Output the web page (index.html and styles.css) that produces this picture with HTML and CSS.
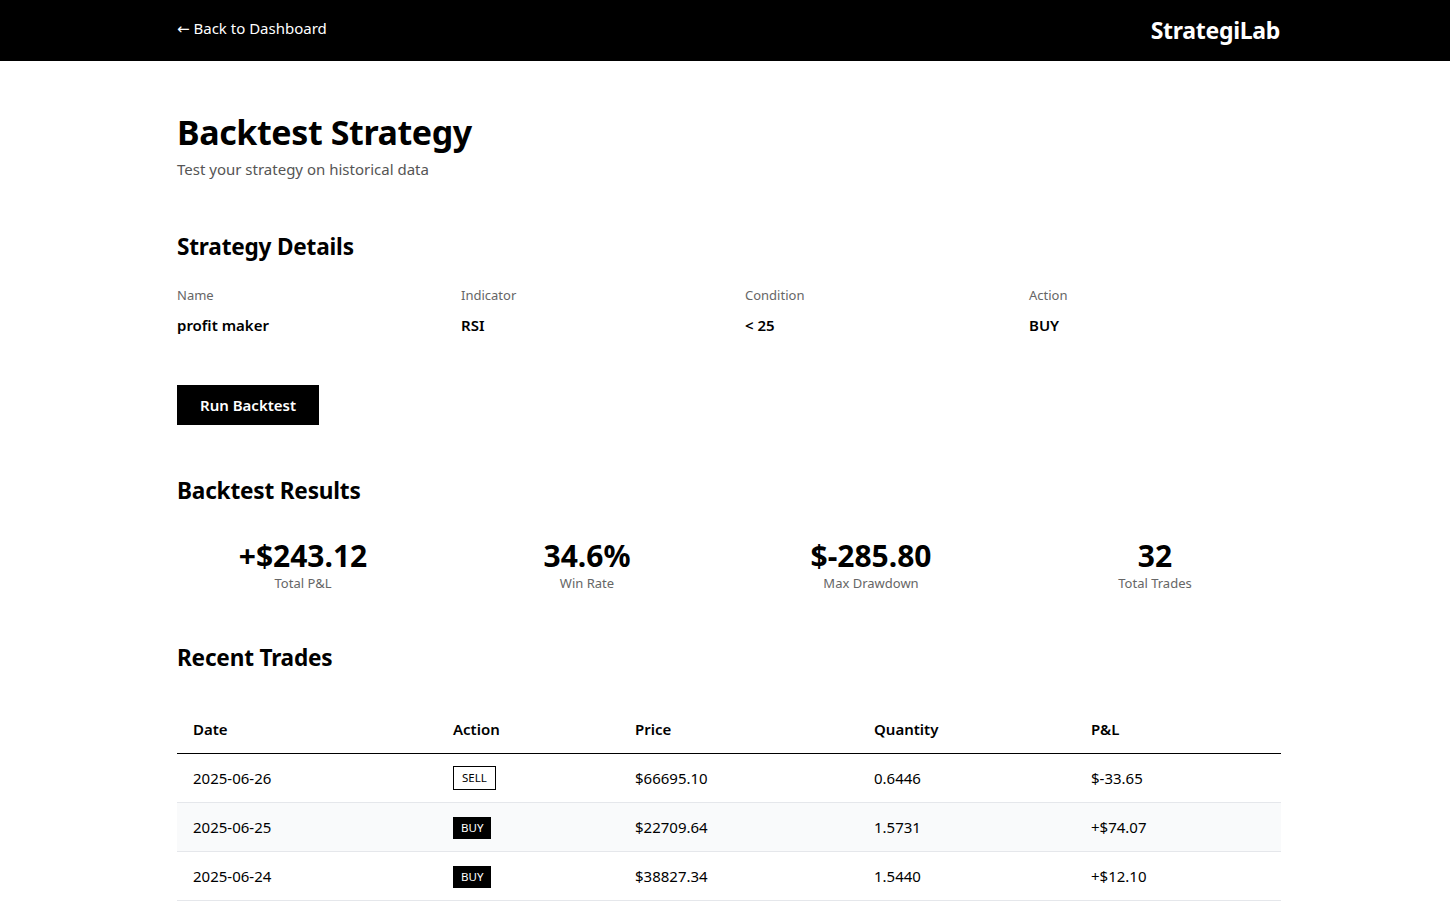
FILE: index.html
```html
<!DOCTYPE html>
<html lang="en">
<head>
<meta charset="utf-8">
<title>Backtest Strategy - StrategiLab</title>
<link rel="stylesheet" href="styles.css">
</head>
<body>
<header class="topbar">
  <div class="topbar-inner">
    <a class="back-link" href="#"><span class="arrow">←</span> Back to Dashboard</a>
    <div class="logo">StrategiLab</div>
  </div>
</header>
<main class="container">
  <h1 class="page-title">Backtest Strategy</h1>
  <p class="page-subtitle">Test your strategy on historical data</p>

  <section class="section details">
    <h2 class="section-title">Strategy Details</h2>
    <div class="detail-grid">
      <div class="detail"><div class="detail-label">Name</div><div class="detail-value">profit maker</div></div>
      <div class="detail"><div class="detail-label">Indicator</div><div class="detail-value">RSI</div></div>
      <div class="detail"><div class="detail-label">Condition</div><div class="detail-value">&lt; 25</div></div>
      <div class="detail"><div class="detail-label">Action</div><div class="detail-value">BUY</div></div>
    </div>
  </section>

  <button class="run-btn" type="button">Run Backtest</button>

  <section class="section results">
    <h2 class="section-title">Backtest Results</h2>
    <div class="stat-grid">
      <div class="stat"><div class="stat-value">+$243.12</div><div class="stat-label">Total P&amp;L</div></div>
      <div class="stat"><div class="stat-value">34.6%</div><div class="stat-label">Win Rate</div></div>
      <div class="stat"><div class="stat-value">$-285.80</div><div class="stat-label">Max Drawdown</div></div>
      <div class="stat"><div class="stat-value">32</div><div class="stat-label">Total Trades</div></div>
    </div>
  </section>

  <section class="section trades">
    <h2 class="section-title">Recent Trades</h2>
    <table class="trade-table">
      <colgroup>
        <col class="c-date"><col class="c-action"><col class="c-price"><col class="c-qty"><col class="c-pnl">
      </colgroup>
      <thead>
        <tr><th>Date</th><th>Action</th><th>Price</th><th>Quantity</th><th>P&amp;L</th></tr>
      </thead>
      <tbody>
        <tr><td>2025-06-26</td><td><span class="badge badge-sell">SELL</span></td><td>$66695.10</td><td>0.6446</td><td>$-33.65</td></tr>
        <tr><td>2025-06-25</td><td><span class="badge badge-buy">BUY</span></td><td>$22709.64</td><td>1.5731</td><td>+$74.07</td></tr>
        <tr><td>2025-06-24</td><td><span class="badge badge-buy">BUY</span></td><td>$38827.34</td><td>1.5440</td><td>+$12.10</td></tr>
      </tbody>
    </table>
  </section>
</main>
</body>
</html>
```

FILE: styles.css
```css
* { box-sizing: border-box; }

body {
  margin: 0;
  background: #fff;
  color: #000;
  font-family: "Segoe UI", "Noto Sans", "Open Sans", sans-serif;
}

.topbar {
  background: #000;
  height: 61px;
}

.topbar-inner {
  margin: 0 170px 0 177px;
  height: 100%;
  display: flex;
  align-items: center;
  justify-content: space-between;
  padding-bottom: 6px;
}

.back-link {
  color: #fff;
  text-decoration: none;
  font-size: 15px;
}

.arrow {
  font-family: "DejaVu Sans", sans-serif;
  font-size: 15px;
}

.logo {
  color: #fff;
  font-weight: 700;
  font-size: 23px;
  letter-spacing: -0.3px;
  padding-top: 5px;
}

.container {
  margin: 0 169px 0 177px;
  padding-top: 49px;
}

.page-title {
  margin: 0 0 3px;
  font-size: 34px;
  line-height: 44px;
  font-weight: 700;
  letter-spacing: -0.4px;
}

.page-subtitle {
  margin: 0;
  font-size: 15px;
  line-height: 24px;
  color: #555;
}

.section-title {
  margin: 0;
  font-size: 22.6px;
  line-height: 32px;
  font-weight: 700;
  letter-spacing: -0.2px;
}

.details { margin-top: 50px; }

.detail-grid {
  margin-top: 22px;
  display: grid;
  grid-template-columns: repeat(4, 1fr);
  column-gap: 32px;
}

.detail-label {
  font-size: 13px;
  line-height: 20px;
  color: #666;
}

.detail-value {
  margin-top: 8px;
  font-size: 15px;
  line-height: 24px;
  font-weight: 600;
}

.run-btn {
  margin-top: 48px;
  display: block;
  height: 40px;
  padding: 0 23px;
  background: #000;
  color: #fff;
  border: 0;
  font-family: inherit;
  font-size: 15px;
  font-weight: 600;
}

.results { margin-top: 50px; }

.stat-grid {
  margin-top: 32px;
  display: grid;
  grid-template-columns: repeat(4, 1fr);
  column-gap: 32px;
}

.stat { text-align: center; }

.stat-value {
  font-size: 30px;
  line-height: 34px;
  font-weight: 700;
}

.stat-label {
  font-size: 13px;
  line-height: 20px;
  color: #666;
}

.trades { margin-top: 49px; }

.trade-table {
  margin-top: 31px;
  width: 100%;
  border-collapse: collapse;
  table-layout: fixed;
  font-size: 15px;
}

.c-date { width: 260px; }
.c-action { width: 182px; }
.c-price { width: 239px; }
.c-qty { width: 217px; }
.c-pnl { width: 206px; }

.trade-table th {
  text-align: left;
  font-weight: 600;
  padding: 12px 16px;
  height: 48px;
  line-height: 24px;
  border-bottom: 1px solid #000;
}

.trade-table td {
  padding: 12px 16px;
  height: 48px;
  line-height: 24px;
  border-bottom: 1px solid #e5e7eb;
}

.trade-table tbody tr:nth-child(even) td { background: #f9fafb; }

.badge {
  display: inline-block;
  font-size: 11.5px;
  line-height: 16px;
  padding: 3px 8px;
  vertical-align: top;
}

.badge-sell {
  border: 1px solid #000;
  color: #000;
  padding: 3px 8px;
}

.badge-buy {
  background: #000;
  color: #fff;
  margin-top: 2px;
  padding: 3px 8px;
}
```
